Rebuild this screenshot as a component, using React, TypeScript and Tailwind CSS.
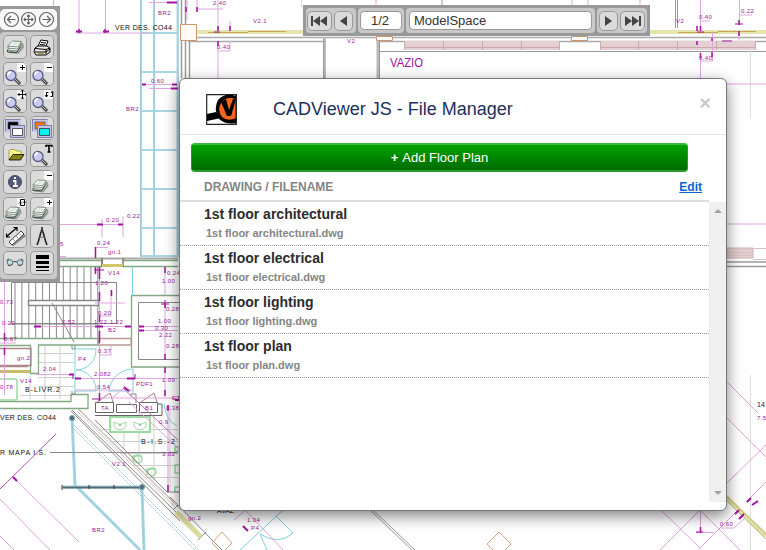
import React from "react";

type Label = [number, number, string];

const purpleLabels: Label[] = [
  [158, 15, "BR2"], [126, 111, "BR2"], [151, 83, "0.60"], [106, 222, "0.20"], [127, 218, "0.22"],
  [97, 245, "0.24"], [108, 254, "gn.1"], [108, 275, "V14"], [95, 285, "1.20"], [167, 275, "0.24"],
  [162, 283, "1.00"], [166, 311, "0.28"], [0, 304, "0.73"], [2, 325, "0.20"],
  [62, 324, "2.52"], [94, 324, "1.22"], [110, 324, "1.22"], [98, 315, "0.20"], [108, 332, "B2"],
  [158, 323, "1.00"], [155, 330, "0.30"], [159, 337, "2.22"], [166, 348, "0.28"],
  [4, 341, "0.67"], [17, 360, "gn.2"], [98, 353, "0.37"], [78, 361, "P4"], [43, 371, "2.04"],
  [94, 376, "2.082"], [162, 382, "1.09"], [136, 386, "PDF1"], [97, 389, "0.54"], [20, 383, "V14"],
  [0, 389, "0.78"], [101, 410, "TA"], [145, 410, "B1"], [166, 410, "0.38"], [172, 400, "ET"],
  [159, 424, "0.9"], [162, 456, "3.02"], [112, 466, "V2.1"], [92, 532, "BR2"], [253, 23, "V2.1"],
  [347, 43, "V2"], [213, 5, "2.40"], [217, 49, "0.40"], [676, 23, "V2"], [699, 19, "0.40"], [741, 13, "0.22"],
  [699, 60, "0.40"], [757, 420, "7.5"], [720, 526, "0.60"], [188, 520, "gn.2"], [247, 522, "1.04"],
  [251, 530, "P4"], [60, 246, "5"],
];

const stairs = Array.from({ length: 13 }, (_, i) => 15 + i * 6.9);
const beamRows = [33, 72, 111, 150, 189, 228, 256];

function Plan() {
  return (
    <svg className="absolute inset-0" width="766" height="550" fill="none">
      {/* glazed facade */}
      <g stroke="#a9d6e4" strokeWidth="2">
        <path d="M141 0V257M154 0V257M177.500 0V257" />
        {beamRows.map((y) => <path key={y} d={`M141 ${y}H178`} />)}
        <path d="M72 418L75 485L140 550M142 488L144 550M62 487H143" strokeWidth="3" />
      </g>
      <g stroke="#8fc4d6" strokeWidth=".6">
        <path d="M140.500 0V257M154.500 0V257M178.500 0V257M72 418L75 485L140 550M142 488L144 550" />
        <path d="M72 427L195 550M74 425L199 550" strokeDasharray="2 1" strokeWidth=".9" />
      </g>
      <path d="M63 487.500H142" stroke="#546b73" strokeWidth="2" />
      <path d="M62 485v5M89 485v4M114 485v4M141 485v5" stroke="#333" strokeWidth="1" />
      <circle cx="72" cy="418" r="2.500" stroke="#69a6bb" fill="#567" />
      <circle cx="142" cy="487" r="2.500" stroke="#69a6bb" fill="#567" />

      {/* walls */}
      <g stroke="#9a9a9a">
        <path d="M181.500 0V78M185.500 0V78M189.500 42V78" strokeWidth="1.500" />
        <path d="M188 37.500H766M188 41.500H325M379 41.500H766" strokeWidth="1.500" stroke="#ababab" />
        <path d="M379 51.500H766M675.500 0V28M677.500 0V28M442 0V6" />
        <path d="M324.500 37V79M378 37V79" strokeWidth="3" stroke="#bababa" />
        <path d="M323.500 39V79M379.500 37V79" />
        <path d="M57 258.500H178" strokeWidth="2" stroke="#aaa" />
        <path d="M750.500 40V118M750.500 375V550M301.500 0V8" stroke="#ddd" />
        <path d="M726 262H766M726 266.500H766" strokeWidth="1.500" />
        <path d="M370 510L412 550M373 510L415 550" />
      </g>
      <path d="M727 248h26v10h-26z" fill="#e2cfd0" stroke="#cfb0b2" />
      <path d="M753 248.500h13M753 259.500h13M727 252.500h26M727 255.500h26" stroke="#d9c2c3" />
      <path d="M404 41h156v9H404zM600 41h155v9H600z" fill="#e4d0d2" />
      <path d="M404 47.500h156M600 47.500h155M404.500 41v9M443.500 41v9M482.500 41v9M521.500 41v9M559.500 41v9M600.500 41v9M638.500 41v9M677.500 41v9M716.500 41v9M755.500 41v9" stroke="#cda9ac" />
      <path d="M197 32H304M650 32H766" stroke="#e5e6ae" strokeWidth="4" />
      <path d="M208 32.500h40M248 31.500h38M678 32.500h40M718 31.500h38" stroke="#c5a759" />
      <path d="M180.500 24.500h16v16h-16zM376.500 36.500h16v4h-16zM571.500 36.500h16v4h-16z" fill="#fffaf5" stroke="#cc976c" />

      {/* staircase */}
      <g stroke="#888">
        {stairs.map((x) => <path key={x} d={`M${x.toFixed(1)} ${x > 60 ? 267 : 282}V338`} />)}
        <path d="M11.500 282.500H116.500V323.500H11.500zM10 324H98" />
        <path d="M28.500 300.500h70v5h-70z" fill="white" strokeWidth="1.500" />
        <path d="M52 303L74 342" />
      </g>
      <g stroke="#cfcfcf">
        <path d="M38 353.500H74M38 362.500H74M38 377.500H74M38 386.500H74M20 395.500H72M30 376V399M45 346V399M60 346V399" />
        <path d="M100 429.500H178M110 441.500H178M121 453.500H178M133 465.500H178M145 477.500H178M124 428V450M139 410V464M154 417V480M170 405V492" />
      </g>
      <g stroke="#82a982" strokeWidth="1.300">
        <path d="M57 260.500H102V266.500H57M123 260.500H178M123 266.500H178M131.500 295.500H179M131.500 295V367H179M0 338.500H98V345H38.500V373.500H30.500V345.500H0M0 401.500H71V394.500H88V408.500H0" />
        <path d="M0 348.500h31v17H0M0 366.500h28" stroke="#a88" />
        <path d="M0 371.500H30" stroke="#c8bd64" strokeWidth="3" />
        <path d="M102 258V267M123 258V267" stroke="#765" />
        <path d="M102 265.500H123" stroke="#d0c769" strokeWidth="3" />
        <path d="M98 338.500H131V345H98z" stroke="#b99" />
      </g>
      <path d="M179 302.500H138.500V359.500H179M72 345v4h3v-4M72 391v3h3v-3M131 396v-2h5v9" stroke="#888" />
      <path d="M95.500 402.500h18v10h-18zM116.500 404.500h20v8h-20zM139.500 402.500h18v10h-18zM95 415.500H162V404h-4" stroke="#666" />
      <path d="M97 402l13-9 3 9M141 402l13-9 3 9" stroke="#b57b7b" />
      <g stroke="#80d2d9">
        <path d="M132.500 267V296M75 346V393M75 349H96A20 20 0 0 1 76 370M75 391H96A20 20 0 0 0 76 370M133 369V393M109 392A24 24 0 0 1 133 369M109 391H131M164 404q2 17 13 22" />
        <path d="M240 550L282 511M276 516L293 533Q279 546 260 534L267 550" />
      </g>
      <g stroke="#9cdaa0" strokeWidth="1.500">
        <path d="M0 379h15q2 0 2 2v17q0 2-2 2H0" />
        <rect x="110" y="417" width="40" height="15" fill="white" strokeWidth="2" />
        <path d="M114 422l4 2h4l4-2v4q-2 4-6 4t-6-4zM134 422l4 2h4l4-2v4q-2 4-6 4t-6-4z" strokeWidth="1" />
        <circle cx="138" cy="459" r="4" /><circle cx="152" cy="472" r="4" />
        <path d="M133 462v-6h9M147 475v-6h9M180 447h-5v4h5M180 465h-5v8h5M180 487h-5v5h5" />
      </g>
      <path d="M119 425h2M139 425h2" stroke="#777" />

      {/* diagonal wing */}
      <path d="M95 420L167 492H180M72 410L180 516M71 411L180 521" stroke="#898989" />
      <path d="M77 408L181 510" stroke="#b5b5b5" />
      <path d="M77 411L175 507M79 409L173 501V506" stroke="#d6b4b4" strokeWidth=".8" />
      <path d="M173 510L178 505M198 540l8-8M170 497L222 550" stroke="#888" />
      <path d="M176 512L201 537" stroke="#dddca0" strokeWidth="5" />
      <path d="M0 489L56 434" stroke="#b34cac" />
      <path d="M50 452.500H178" stroke="#8b8b8b" />
      <path d="M222 532l-10 11 11 11M222 532l10 11-8 8M499 532l12 12-12 12-12-12z" stroke="#d3a784" />
      <path d="M726 497L766 536" stroke="#e2e0a7" strokeWidth="5" />
      <path d="M726 496L766 534M726 500L766 539" stroke="#bdb773" />

      {/* dimension chains */}
      <g stroke="#dfa6df">
        <path d="M53.500 0V6M79 0V33M105.500 0V33M75 33H148M57 224.500H123M102 219V237M123 216V237M96 247.500H108M57 256.500h9M196 9H223" />
        <path d="M13 477L79 542M0 499L50 550M0 536L14 550M129 402L180 450" />
        <path d="M141 84.500H178M149 88.500H178M149 2.500H178M187 0V20M197 0V12M218 0V31M218 41V78M230 21V31M218 51h12V41M376 0V6M572 0V6M588 0V6" />
        <path d="M700.500 0V30M700.500 52V79M712.500 32V61H701M739.500 0V24M739 15h13M700 21h10M739 31v9M640 0V6M727 84H766M727 224H766" />
        <path d="M34 326.500H131M138 326.500H178M138 330.500H178M99.500 267V401M4.500 282V395M36 374.500H74M75 378.500H178M165 302V360M165 267V295M165 367V397M168 405V492M111 290V316H100M111 345V355H100M75 390H133M95 303H125M0 343h16M100 398h79M112 398l12-10" />
        <path d="M727 382L758 413M727 418L766 457M727 483L766 445M746 502L766 482M660 550L737 473M661 510L700 548M700 510L740 550M699 549L738 510M700.500 510V532M696 532.500h18M721 528h13l11-10M246 511L283 550M234 520L248 508" />
      </g>
      <g stroke="#a3129e" strokeWidth="1">
        <path d="M76 31.500h6M103 31.500h6M167 2.500h10M142 84.500h4M172 84.500h5M171 88.500h7M97 224.500h6M118 224.500h5M34 326.500h7M95 326.500h8M125 326.500h6M139 326.500h5M139 330.500h5M69 374.500h5M75 378.500h6M127 378.500h8M13 477l4 4M124 387l5 4M175 400h5M243 526l5 5M747 502l4-4M752 505l6-4M735 514l4-4M739 519l5-5" strokeWidth="2" />
        <path d="M95.500 247V258M95.500 267v7M99.500 267v12M99.500 292v9M99.500 315v7M99.500 331v12M99.500 393v8M111.500 290v6M4.500 333v7M4.500 348v7M165 303v5M165 354v6M165 267v6M165 367v6M165 390v6M168 405v6M168 485v7M218 26v5M218 41v5M230 26v5M700.500 26v5M700.500 53v5M697 26v5M697 41v4M712 38v3M712 52v5M739 20v5M739 31v5M700.500 527v6M79 29v4M105 29v4M186 7v5M197 7v5" strokeWidth="1.500" />
        <path d="M73 374v5M135 374v5M165 300v4M161 304h8M214 32h6M735 24h8M697 32h7M722 41h10M94 270h10M92 399h8M696 532h7" />
      </g>
      <path d="M123 388L178 440" stroke="#c66fc4" />
      <g fill="#9b1597" fontFamily="'Liberation Sans', sans-serif" fontSize="6" letterSpacing=".4">
        {purpleLabels.map(([x, y, text], i) => <text key={i} x={x} y={y}>{text}</text>)}
      </g>
      <g fill="#111" fontFamily="'Liberation Sans', sans-serif" fontSize="7">
        <text x="115" y="30" textLength="57">VER DES. CO44</text>
        <text x="0" y="420" textLength="56">VER DES. CO44</text>
        <text x="0" y="455" textLength="46">R MAPA I.S.</text>
        <text x="25" y="392" textLength="35">B-LIVR.2</text>
        <text x="141" y="444" textLength="34">B-I.S.-2</text>
        <text x="757" y="407">14</text>
        <text x="217" y="513">AVAZ</text>
      </g>
      <text x="390" y="67" fill="#a313a0" fontSize="12.500" textLength="33" lengthAdjust="spacingAndGlyphs" fontFamily="'Liberation Sans', sans-serif">VAZIO</text>
    </svg>
  );
}

function Lens({ badge }: { badge: "plus" | "minus" | "move" | "window" | "text" }) {
  return (
    <svg width="24" height="24" fill="none" className="block">
      {badge !== "text" && <path d="M14 0h8q2 0 2 2v8H14z" fill="white" />}
      <path d="M12 17l5 5" stroke="#aaa" strokeWidth="4" />
      <path d="M12 17l5 5" stroke="#444" strokeWidth="2.500" />
      <path d="M12 17l4 4" stroke="#ddd" strokeWidth=".8" />
      <circle cx="8" cy="13.500" r="5" fill="#c9caed" stroke="#59598c" strokeWidth="1.300" />
      <path d="M5 13q0-3 3-3" stroke="white" strokeWidth="2" />
      {badge === "plus" && <path d="M17 5.500h5M19.500 3v5" stroke="black" />}
      {badge === "minus" && <path d="M17 5.500h5" stroke="black" />}
      {badge === "move" && <path d="M15 5.500h9M19.500 1v9M18 2.500l1.500-1.500 1.500 1.500M18 8.500l1.500 1.500 1.500-1.500M16.500 4L15 5.500 16.500 7M22.500 4L24 5.500 22.500 7" stroke="black" />}
      {badge === "window" && <path d="M16.500 8V3.500h2M22.500 2.500v5h-2M15 6l1.500 2L18 6M21 4l1.500-2L24 4" stroke="black" />}
      {badge === "text" && <path d="M16 4V2.500h6V4M19 2v7M17.500 9h3" stroke="black" strokeWidth="1.600" />}
    </svg>
  );
}

function Layers({ badge, big = false }: { badge?: "plus" | "minus" | "cycle"; big?: boolean }) {
  return (
    <svg width="24" height="24" fill="none" className="block">
      {badge && <path d="M14 0h8q2 0 2 2v8H14z" fill="white" />}
      <g transform={big ? "translate(2 -4)" : "translate(.5 .5) scale(.95)"}>
        <path d="M4 21l9 1 5-6-1-4" stroke="#999" strokeWidth="2" />
        {[19, 17, 15].map((y) => <path key={y} d={`M2.500 ${y}l5-5 9 .5-4 5.500z`} fill="#fafdf9" stroke="#6d8073" strokeWidth=".9" />)}
        <path d="M2.500 19v2l9 .5 4-6" stroke="#304936" />
        <path d="M6 14l3-3 5 .5-3 3" fill="#dfe7dd" />
      </g>
      {badge === "plus" && <path d="M17 5.500h5M19.500 3v5" stroke="black" />}
      {badge === "minus" && <path d="M17 5.500h5" stroke="black" />}
      {badge === "cycle" && <path d="M17.500 5V2.500h4V5M21.500 5v3.500h-4V6M20 4.500l1.500 1.500L23 4.500M16 6.500L17.500 5 19 6.500" stroke="black" />}
    </svg>
  );
}

function Windows({ back, front }: { back: string; front: string }) {
  return (
    <svg width="24" height="24" fill="none" className="block">
      <path d="M2 3h16v13H2z" fill="#c4c4e8" />
      <path d="M2.500 3.500h15M2.500 3v12" stroke="#8080a8" />
      <path d="M5 6h10v7H5z" fill={back} stroke="#444" strokeWidth=".6" />
      <path d="M7 9h15v13H7z" fill="#c4c4e8" />
      <path d="M7.500 22V9.500H22M8 21.500h13.500V10" stroke="#6b6b91" strokeWidth=".8" />
      <path d="M9.500 12.500h10v7h-10z" fill={front} stroke="#444" strokeWidth=".9" />
    </svg>
  );
}

const tools: React.ReactNode[] = [
  <Layers big />,
  <svg width="24" height="24" fill="none"><path d="M8 11l3-6 7 1-2 5" fill="white" stroke="black" /><path d="M5 13l3-2h9l3 2v4l-4 3H6l-2-3z" fill="#eee" stroke="black" /><path d="M11 7.500l5 .5M10 9.500l5 .5M5 13.500l11 1 4-1.500M5 17h11l4-3M16 15v4" stroke="black" /><path d="M8 18.500h6" stroke="#ad9e35" /></svg>,
  <Lens badge="plus" />, <Lens badge="minus" />, <Lens badge="move" />, <Lens badge="window" />,
  <Windows back="#000" front="#fff" />, <Windows back="#f47805" front="#08f1ed" />,
  <svg width="24" height="24" fill="none"><path d="M6 17V8l1.500-1.500h4L13 8h5v3" fill="#ffff8a" stroke="#a5a24b" /><path d="M6 17l4-5.500h11L17.500 17z" fill="#85851e" stroke="black" strokeWidth=".8" /></svg>,
  <Lens badge="text" />,
  <svg width="24" height="24" fill="none"><circle cx="12" cy="12" r="6.500" fill="#565879" stroke="#45476a" /><path d="M10 11h2.500v5M10 16h5M11 8h2" stroke="white" strokeWidth="1.800" /></svg>,
  <Layers badge="minus" />, <Layers badge="cycle" />, <Layers badge="plus" />,
  <svg width="24" height="24" fill="none"><path d="M9 21l13-10" stroke="#888" strokeWidth="3" /><path d="M6 18L18 7l3 3L9 21z" fill="white" stroke="#444" /><path d="M3 13L14 3.500M3.500 9.500V13H7M10.500 3.500H14V7" stroke="black" strokeWidth="1.200" /><path d="M10 15l2 2M13 12l2 2M16 9.500l2 2" stroke="#999" /></svg>,
  <svg width="24" height="24" fill="none"><path d="M12 3v3M11 8L8.500 17l-1.500 4M13 8l2.500 9 1.500 4" stroke="#222" strokeWidth="1.600" /><path d="M9 14q3-2 6 0" stroke="#777" /><circle cx="12" cy="7" r="1.600" fill="#333" /></svg>,
  <svg width="24" height="24" fill="none"><path d="M4 10.500q0-2.500 2-2.500M20 10.500q0-2.500-2-2.500M10 11q2-1 4 0" stroke="#444" /><circle cx="7" cy="11.500" r="2.800" fill="#bfdce2" stroke="#5e7880" /><circle cx="17" cy="11.500" r="2.800" fill="#bfdce2" stroke="#5e7880" /><path d="M5 14.500q3 1 5-2M15 14.500q3 1 5-2" stroke="#555" /></svg>,
  <svg width="24" height="24"><path d="M6 4h13v4H6zM6 10h13v3H6zM6 15h13v2H6zM6 19h13v1H6z" fill="black" /></svg>,
];

function Toolbox() {
  return (
    <aside className="absolute left-0 top-[6px] h-[276px] w-[60px] bg-[#999] pt-[3px]">
      <div className="h-[21px] w-[57px] rounded-[5px] bg-[#f9f9f9] pl-[3px] pt-[2px]">
        <svg width="54" height="17" fill="none" stroke="#666" strokeWidth="1.200">
          <circle cx="8.500" cy="8.500" r="7" /><circle cx="25.500" cy="8.500" r="7" /><circle cx="43.500" cy="8.500" r="7" />
          <path d="M4.500 8.500h8M8 5l-3.500 3.500L8 12M21 8.500h9M25.500 4v9M24 5.500L25.500 4 27 5.500M24 11.500l1.500 1.500 1.500-1.500M22.500 7L21 8.500l1.500 1.500M28.500 7L30 8.500 28.500 10M39.500 8.500h8M44 5l3.500 3.500L44 12" />
        </svg>
      </div>
      <div className="mt-[2px] grid h-[247px] w-[57px] grid-cols-[24px_24px] content-start gap-[3px] rounded-[4px] bg-[#c9c9c9] pl-[3px] pt-[3px]">
        {tools.map((icon, i) => (
          <button key={i} className="relative block size-6 overflow-hidden rounded-[4px] bg-[#dbdbdb] *:block after:absolute after:inset-0 after:rounded-[4px] after:border after:border-[#999] after:content-['']">{icon}</button>
        ))}
      </div>
    </aside>
  );
}

function NavButton({ wide = false, flip = false }: { wide?: boolean; flip?: boolean }) {
  return (
    <button className={`flex h-5 items-center justify-center rounded-[5px] border border-[#999] bg-[#dbdbdb] ${wide ? "w-[25px]" : "w-[19px]"}`}>
      <svg width={wide ? 17 : 9} height="10" fill="#444" className={flip ? "-scale-x-100" : ""}>
        {wide ? <path d="M0 0h2v10H0zM9 0v10L2 5zM16 0v10L9 5z" /> : <path d="M8 0v10L1 5z" />}
      </svg>
    </button>
  );
}

function PageBar() {
  return (
    <nav className="absolute left-[303px] top-[5px] flex h-[31px] w-[347px] gap-[2px] bg-[#999] p-[3px] font-['Liberation_Sans',sans-serif] text-[13px] text-[#333]">
      <div className="flex w-[50px] shrink-0 items-center gap-[2px] rounded-[4px] bg-[#c9c9c9] pl-[1px]"><NavButton wide /><NavButton /></div>
      <div className="flex w-[46px] shrink-0 items-center justify-center rounded-[4px] bg-[#c9c9c9]">
        <span className="flex h-[19px] w-[42px] items-center justify-center rounded-[4px] border border-[#999] bg-white pr-[2px]">1/2</span>
      </div>
      <div className="flex w-[189px] shrink-0 items-center justify-center rounded-[4px] bg-[#c9c9c9]">
        <span className="flex h-[19px] w-[183px] items-center rounded-[4px] border border-[#999] bg-white pl-[4px]">ModelSpace</span>
      </div>
      <div className="flex w-[50px] shrink-0 items-center gap-[2px] rounded-[4px] bg-[#c9c9c9] pl-[2px]"><NavButton flip /><NavButton wide flip /></div>
    </nav>
  );
}

const files = ["1st floor architectural", "1st floor electrical", "1st floor lighting", "1st floor plan"];

function FileManager() {
  return (
    <section className="absolute left-[179px] top-[78px] flex h-[433px] w-[548px] flex-col overflow-hidden rounded-[6px] border border-[#777] bg-white font-['Liberation_Sans',sans-serif] shadow-[0_5px_15px_rgba(0,0,0,0.5)]">
      <header className="flex h-[56px] shrink-0 items-start border-b border-[#e5e5e5] pl-[26px] pr-[15px] pt-[15px]">
        <svg width="31" height="31" className="shrink-0">
          <path d="M.7.700h29.600v29.600H.7z" fill="white" stroke="#222" strokeWidth="1.200" />
          <path d="M1 20l9-2 5 6-14 3z" fill="black" />
          <path d="M30 2Q19-2 12 6Q7 16 13 25Q20 31 30 29z" fill="black" />
          <path d="M30 5Q20 2 15 9Q11 16 16 23Q22 28 30 24z" fill="#f7651a" />
          <path d="M15 8l5-3 3 11 4-11h3L25 22h-4z" fill="black" />
          <path d="M30 1v29" stroke="#111" />
        </svg>
        <h1 className="ml-[36px] mt-[3px] w-[260px] text-[18px] leading-6 text-[#1b2f5b]">CADViewer JS - File Manager</h1>
        <button className="ml-auto -mt-[3px] text-[20px] font-bold leading-6 text-[#c9c9c9]">×</button>
      </header>
      <button className="ml-[11px] mt-[8px] flex h-[29px] w-[497px] shrink-0 items-center justify-center rounded-[4px] border-x border-y-2 border-x-[#29992d] border-b-[#299d2d] border-t-[#39b83b] bg-linear-to-b from-[#00a400] to-[#006b00] text-[13px] text-white">
        <b className="mr-1">+</b>Add Floor Plan
      </button>
      <div className="flex h-[30px] w-[529px] shrink-0 items-center justify-between border-b-2 border-[#ddd] pl-[24px] pr-[7px] pt-[2px] text-[12px] font-bold text-[#858585]">
        <span>DRAWING / FILENAME</span>
        <a className="text-[#0b65d8] underline">Edit</a>
      </div>
      <div className="flex h-[300px]">
        <ul className="w-[529px]">
          {files.map((name) => (
            <li key={name} className="h-[44px] border-b border-dotted border-[#999] pl-[24px] pt-[3px]">
              <div className="text-[14px] font-bold leading-[18px] text-[#2c2c2c]">{name}</div>
              <div className="pl-[2px] pt-[3px] text-[11px] font-bold leading-[14px] text-[#858585]">{name}.dwg</div>
            </li>
          ))}
        </ul>
        <div className="flex w-[17px] flex-col items-center justify-between bg-[#f0f0f0] py-[7px]">
          <i className="border-x-4 border-b-4 border-x-transparent border-b-[#a3a3a3]" />
          <i className="border-x-4 border-t-4 border-x-transparent border-t-[#a3a3a3]" />
        </div>
      </div>
    </section>
  );
}

export default function App() {
  return (
    <main className="relative h-[550px] w-[766px] overflow-hidden bg-white">
      <Plan />
      <Toolbox />
      <PageBar />
      <FileManager />
    </main>
  );
}
